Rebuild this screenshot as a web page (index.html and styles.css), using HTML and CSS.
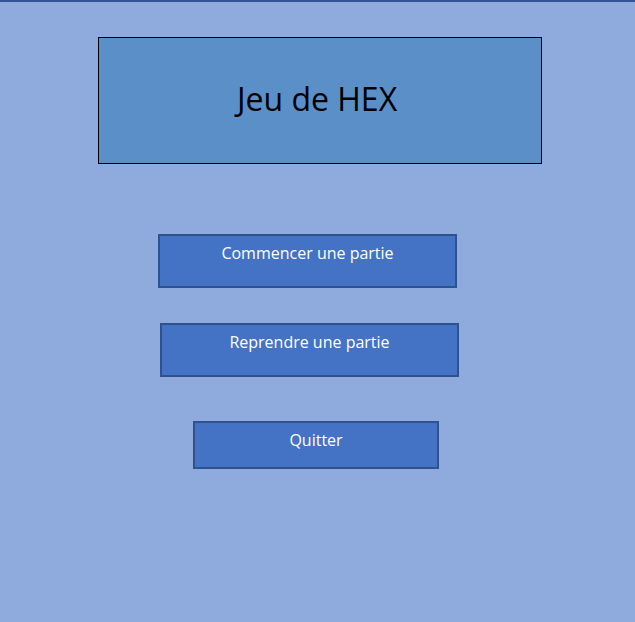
FILE: index.html
```html
<!DOCTYPE html>
<html lang="fr">
<head>
<meta charset="utf-8">
<title>Jeu de HEX</title>
<link rel="stylesheet" href="styles.css">
</head>
<body>
<div class="page">
  <div class="title-box"><h1 class="title">Jeu de HEX</h1></div>
  <div class="menu">
    <button class="btn btn-start">Commencer une partie</button>
    <button class="btn btn-resume">Reprendre une partie</button>
    <button class="btn btn-quit">Quitter</button>
  </div>
</div>
</body>
</html>
```
FILE: styles.css
```css
html, body {
  margin: 0;
  padding: 0;
  height: 100%;
}
body {
  background: #8faadc;
  font-family: "Open Sans", "Noto Sans", sans-serif;
}
.page {
  border-top: 2px solid #2f5597;
  min-height: 620px;
  display: flex;
  flex-direction: column;
  align-items: flex-start;
}
.title-box {
  margin: 35px 0 0 98px;
  width: 442px;
  height: 125px;
  border: 1px solid #000;
  background: #5b8fc8;
  display: flex;
  align-items: center;
  justify-content: center;
}
.title {
  margin: 0;
  font-weight: 400;
  font-size: 32px;
  color: #000;
  line-height: 1;
  padding: 0 6px 4px 0;
}
.menu {
  display: flex;
  flex-direction: column;
  align-items: flex-start;
}
.btn {
  box-sizing: border-box;
  background: #4472c4;
  border: 2px solid #2f528f;
  color: #fff;
  font-family: inherit;
  font-size: 16px;
  line-height: 20px;
  padding: 7px 0 0 0;
  text-align: center;
  display: flex;
  justify-content: center;
  align-items: flex-start;
}
.btn-start {
  margin: 70px 0 0 158px;
  width: 299px;
  height: 54px;
}
.btn-resume {
  margin: 35px 0 0 160px;
  width: 299px;
  height: 54px;
}
.btn-quit {
  margin: 44px 0 0 193px;
  width: 246px;
  height: 48px;
}
```
